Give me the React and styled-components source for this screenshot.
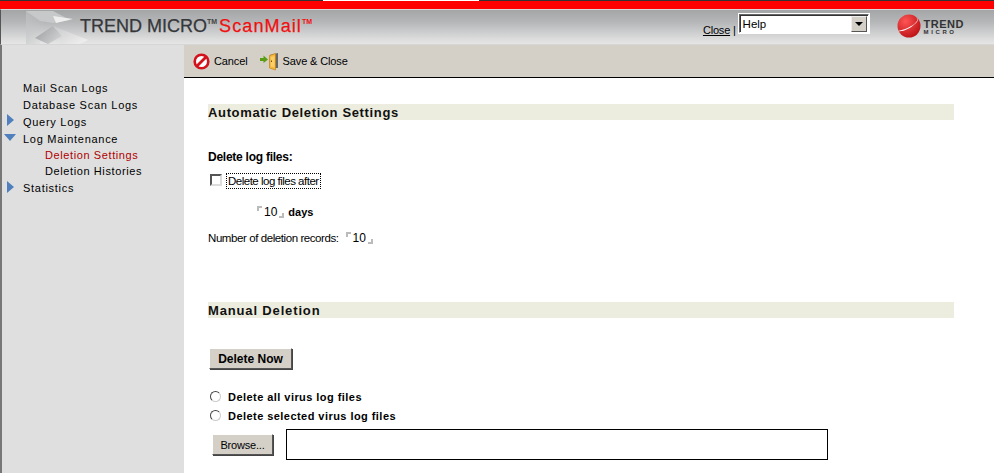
import React from 'react';
import styled, { createGlobalStyle } from 'styled-components';

const Global = createGlobalStyle`
  html, body { margin: 0; padding: 0; background: #fff; overflow: hidden; }
  body { font-family: "Liberation Sans", Arial, sans-serif; color: #000; }
`;
const Page = styled.div`
  width: 994px; height: 473px; display: flex; flex-direction: column; overflow: hidden;
  box-sizing: border-box;
`;
const TopStrip = styled.div`display: flex; height: 1px; background: #333; flex: none;`;
const StripGap = styled.div`width: 156px; margin-left: 323px; background: #fff;`;
const RedBar = styled.div`height: 8px; background: #ff0000; flex: none;`;
const Header = styled.header`
  height: 34px; flex: none; display: flex; align-items: center;
  border-top: 1px solid #d8d8d8; border-bottom: 1px solid #d6d6d6; border-left: 1px solid #555;
  background: linear-gradient(#a3a5a7 0%, #b4b6b8 35%, #dcdcdc 85%, #e6e6e6 100%);
`;
const LogoMark = styled.svg`width: 64px; height: 34px; flex: none; margin-left: 25px; align-self: flex-end;`;
const Brand = styled.div`
  font-size: 18px; color: #35373a; margin-left: -10px; white-space: nowrap; display: flex; align-items: flex-start;
  line-height: 22px; padding-bottom: 2px; -webkit-text-stroke: .25px currentColor;
`;
const Tm = styled.sup`font-size: 7px; line-height: 10px; font-weight: bold; margin-top: 2px; letter-spacing: 0; -webkit-text-stroke: 0; color: ${p => p.$c};`;
const Red = styled.span`color: #f01010; margin-left: 2px; letter-spacing: 1.1px;`;
const Right = styled.div`margin-left: auto; display: flex; align-items: flex-start; align-self: flex-start; padding-top: 4px; margin-right: 30px;`;
const CloseArea = styled.div`font-size: 11px; padding-top: 10px; white-space: nowrap; letter-spacing: -.2px; margin-right: 3px;`;
const CloseLink = styled.a`color: #000; text-decoration: underline;`;
const Select = styled.div`
  width: 125px; height: 17px; box-sizing: content-box; background: #fff; display: flex; align-items: center; justify-content: space-between;
  border: 1px solid; border-color: #666 #fff #fff #666; outline: 1px solid #fff;
  box-shadow: inset 1px 1px 0 #333; font-size: 11.5px; padding-left: 3px;
`;
const Arrow = styled.div`
  width: 14px; height: 14px; margin-right: 1px; background: #d4d0c8; border: 1px solid; border-color: #eee #555 #555 #eee; display: flex; align-items: center; justify-content: center;
  &::after { content: ""; border: 4px solid transparent; border-top: 4px solid #000; border-bottom: 0; }
`;
const TMLogo = styled.div`display: flex; align-items: center; margin-left: 28px; gap: 3px;`;
const TMText = styled.div`display: flex; flex-direction: column; font-weight: bold; color: #333; font-size: 11px; line-height: 10px; letter-spacing: .5px; padding-top: 3px;`;
const TMSub = styled.span`font-size: 6px; line-height: 7px; letter-spacing: 2.6px;`;
const Body = styled.div`flex: 1; display: flex; min-height: 0;`;
const Side = styled.nav`
  width: 184px; flex: none; box-sizing: border-box; background: #dfdfdf; border-left: 2px solid #777; padding-top: 35px; font-size: 11px; letter-spacing: .72px;
`;
const Item = styled.div`
  height: 17px; line-height: 17px; position: relative; white-space: nowrap;
  padding-left: 21px;
`;
const SubItem = styled.div`
  height: 16px; line-height: 15px; white-space: nowrap; padding-left: 43px; letter-spacing: .6px;
  color: ${p => (p.$active ? '#b00000' : '#000')};
`;
const Caret = styled.svg`position: absolute; left: ${p => p.$l}px; top: ${p => p.$t}px;`;
const Main = styled.main`flex: 1; display: flex; flex-direction: column; min-width: 0;`;
const Toolbar = styled.div`
  height: 32px; flex: none; background: #d4d0c8; border-bottom: 1px solid #000; display: flex; align-items: center; padding-left: 9px; font-size: 11px; gap: 12px; letter-spacing: -.12px;
`;
const Tool = styled.div`display: flex; align-items: center; gap: ${p => p.$gap}px; white-space: nowrap;`;
const Content = styled.div`flex: 1; padding: 26px 40px 0 24px; font-size: 11px; display: flex; flex-direction: column;`;
const SectionBar = styled.h2`
  margin: 0; height: 16px; line-height: 17px; background: #ecedde; font-size: 13px; font-weight: bold; letter-spacing: ${p => p.$sp}px; color: #111;
`;
const Label = styled.div`font-weight: bold; font-size: 12px; margin-top: 30px; line-height: 14px; letter-spacing: -.25px;`;
const CheckRow = styled.div`display: flex; align-items: center; margin-top: 9px; height: 15px; font-size: 11.5px; letter-spacing: -.5px;`;
const Check = styled.span`width: 12px; height: 12px; box-sizing: border-box; background: #fff; border: 2px solid; border-color: #555 #ddd #ddd #555; margin: -1px 5px 0 2px;`;
const Focused = styled.span`outline: 1px dotted #000; padding: 0 1px; line-height: 14px;`;
const ValueRow = styled.div`display: flex; align-items: center; margin: 17px 0 0 ${p => p.$left}px; height: 14px; font-size: 12px;`;
const CornerBox = styled.span`
  position: relative; padding: 0 8px 0 7px; font-size: 12px; letter-spacing: 0; line-height: 14px; display: inline-block;
  margin-left: ${p => p.$ml || 0}px; margin-right: ${p => p.$mr || 0}px;
  &::before { content: ""; position: absolute; left: 0; top: 1px; width: 3px; height: 3px; border-left: 2px solid #bbb; border-top: 2px solid #bbb; }
  &::after { content: ""; position: absolute; right: 1px; bottom: 1px; width: 3px; height: 3px; border-right: 2px solid #bbb; border-bottom: 2px solid #bbb; }
`;
const Bold = styled.b`font-size: 11px;`;
const RecordsRow = styled.div`display: flex; align-items: center; margin-top: 12px; height: 14px; font-size: 11.5px; letter-spacing: -.42px;`;
const Push = styled.div`height: ${p => p.$h}px; flex: none;`;
const Btn = styled.button`
  font-family: inherit; background: #d4d0c8; color: #000; border: 1px solid; border-color: #fff #555 #555 #fff; box-shadow: 1px 1px 0 #444; padding: 0;
  width: ${p => p.$w}px; height: ${p => p.$h}px; font-size: ${p => p.$fs}px; font-weight: ${p => (p.$b ? 'bold' : 'normal')};
  letter-spacing: ${p => (p.$b ? '0' : '-.2px')}; margin-left: ${p => p.$ml}px; flex: none; align-self: flex-start;
`;
const RadioRow = styled.label`display: flex; align-items: center; height: 19px; font-weight: bold; font-size: 11px; letter-spacing: .45px;`;
const Radio = styled.span`
  width: 11px; height: 11px; border-radius: 50%; box-sizing: border-box; background: #fff; border: 1.5px solid; border-color: #444 #ccc #ccc #444; margin: 0 7px 0 2px;
`;
const FileRow = styled.div`display: flex; align-items: center; margin-top: 4px;`;
const FileBox = styled.div`width: 542px; height: 31px; box-sizing: border-box; border: 1px solid #000; background: #fff; margin-left: 13px;`;
const BrowseWrap = styled.div`display: flex; align-items: center;`;

const Triangle = ({ open, t, l }) => (
  <Caret $t={t} $l={l} width={open ? 13 : 9} height={open ? 8 : 13}>
    <path d={open ? 'M0 0H12L6 7Z' : 'M0 0L7 6L0 12Z'} fill="#4f80bd" />
  </Caret>
);

export default function App() {
  return (
    <Page>
      <Global />
      <TopStrip><StripGap /></TopStrip>
      <RedBar />
      <Header>
        <LogoMark viewBox="0 0 64 34">
          <defs>
            <linearGradient id="dk" x1="0" y1="0" x2="1" y2=".6"><stop offset="0" stopColor="#999b9d" /><stop offset="1" stopColor="#cfd0d1" /></linearGradient>
            <linearGradient id="lt" x1="0" y1="0" x2="1" y2="1"><stop offset="0" stopColor="#c8c9ca" /><stop offset="1" stopColor="#f2f2f2" /></linearGradient>
            <linearGradient id="pale" x1="0" y1="0" x2="1" y2="0"><stop offset="0" stopColor="#c4c6c7" stopOpacity=".6" /><stop offset="1" stopColor="#c8cacb" stopOpacity="0" /></linearGradient>
          </defs>
          <path d="M0 1H20L14 34H0Z" fill="url(#pale)" />
          <path d="M0 1L27 1L44 10L27 13L14 11Z" fill="#c6c8c9" />
          <path d="M27 6L47 9L30 13Z" fill="#eeeeee" />
          <path d="M9 28L27 16L36 26L22 34Z" fill="url(#dk)" />
          <path d="M27 16L62 30L54 34L34 34L36 26Z" fill="url(#lt)" />
        </LogoMark>
        <Brand>
          TREND MICRO<Tm $c="#444">TM</Tm><Red>ScanMail</Red><Tm $c="#f01010">TM</Tm>
        </Brand>
        <Right>
          <CloseArea><CloseLink>Close</CloseLink> |</CloseArea>
          <Select>Help<Arrow /></Select>
          <TMLogo>
            <svg width="24" height="24" viewBox="0 0 24 24">
              <defs><radialGradient id="g" cx=".35" cy=".3" r=".8"><stop offset="0" stopColor="#f55" /><stop offset="1" stopColor="#b80d12" /></radialGradient></defs>
              <circle cx="12" cy="12" r="11.5" fill="url(#g)" />
              <path d="M1.5 17C5 18 13 15 19 9C22 6 21 4 19 3.5C22 5 20 8 16 11C10 15 4 16 1.5 17Z" fill="#fff" />
            </svg>
            <TMText>TREND<TMSub>MICRO</TMSub></TMText>
          </TMLogo>
        </Right>
      </Header>
      <Body>
        <Side>
          <Item>Mail Scan Logs</Item>
          <Item>Database Scan Logs</Item>
          <Item><Triangle t={0} l={5} />Query Logs</Item>
          <Item><Triangle open t={3} l={2} />Log Maintenance</Item>
          <SubItem $active>Deletion Settings</SubItem>
          <SubItem>Deletion Histories</SubItem>
          <Item><Triangle t={1} l={5} />Statistics</Item>
        </Side>
        <Main>
          <Toolbar>
            <Tool $gap={4}>
              <svg width="17" height="17" viewBox="0 0 17 17">
                <circle cx="8.5" cy="8.5" r="6.8" fill="#fff" stroke="#d3121c" strokeWidth="2.6" />
                <path d="M4 13L13 4" stroke="#d3121c" strokeWidth="2.8" />
              </svg>
              Cancel
            </Tool>
            <Tool $gap={3}>
              <svg width="20" height="19" viewBox="0 0 20 19">
                <path d="M0 6H3.5V3.5L8 7.5L3.5 11V9H0Z" fill="#5a9c14" />
                <path d="M10 3L18 1V16L12 16Z" fill="#666" />
                <path d="M9.5 3.5L15.5 1.5V15L15.5 18L9.5 16Z" fill="#f5b93e" stroke="#c6801a" strokeWidth=".7" />
                <path d="M11 5L14.5 4V15L11 14.5Z" fill="#f9cf6a" />
                <rect x="11" y="8.5" width="1" height="1.5" fill="#7a4a00" />
              </svg>
              Save &amp; Close
            </Tool>
          </Toolbar>
          <Content>
            <SectionBar $sp={0.65}>Automatic Deletion Settings</SectionBar>
            <Label>Delete log files:</Label>
            <CheckRow><Check /><Focused>Delete log files after</Focused></CheckRow>
            <ValueRow $left={49}><CornerBox $mr={3}>10</CornerBox><Bold>days</Bold></ValueRow>
            <RecordsRow>Number of deletion records:<CornerBox $ml={7}>10</CornerBox></RecordsRow>
            <Push $h={57} />
            <SectionBar $sp={0.85}>Manual Deletion</SectionBar>
            <Push $h={30} />
            <Btn $w={83} $h={21} $fs={12} $ml={1} $b>Delete Now</Btn>
            <Push $h={18} />
            <RadioRow><Radio />Delete all virus log files</RadioRow>
            <RadioRow><Radio />Delete selected virus log files</RadioRow>
            <FileRow>
              <BrowseWrap><Btn $w={61} $h={21} $fs={11} $ml={4}>Browse...</Btn></BrowseWrap>
              <FileBox />
            </FileRow>
          </Content>
        </Main>
      </Body>
    </Page>
  );
}
